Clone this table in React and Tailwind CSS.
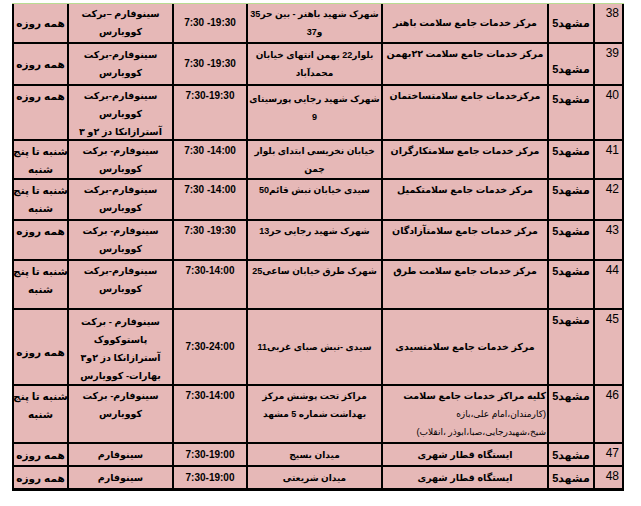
const ROWS = [
  {
    n: "38",
    city: { v: "center" },
    center: { t: ["مرکز خدمات جامع  سلامت  باهنر"], v: "center" },
    addr: { t: ["شهرک شهید باهنر - بین حر35", "و37"], v: "center" },
    time: { t: "7:30 -19:30", v: "center" },
    vac: { t: ["سینوفارم –برکت", "کوویارس"], v: "center" },
    days: { t: ["همه روزه"], v: "center" },
  },
  {
    n: "39",
    city: { v: "top", x: "pt-[16px]" },
    center: { t: ["مرکز خدمات جامع سلامت ۲۲بهمن"], v: "top" },
    addr: { t: ["بلوار22 بهمن انتهای خیابان", "محمدآباد"], v: "center" },
    time: { t: "7:30 -19:30", v: "center" },
    vac: { t: ["سینوفارم-برکت", "کوویارس"], v: "center" },
    days: { t: ["همه روزه"], v: "center" },
  },
  {
    n: "40",
    city: { v: "top", x: "pt-[4px]" },
    center: { t: ["مرکزخدمات جامع  سلامتساختمان"], v: "top" },
    addr: { t: ["شهرک شهید رجایی پورسینای", "9"], v: "top", x: "pt-[4px] leading-[15px]" },
    time: { t: "7:30-19:30", v: "top" },
    vac: { t: ["سینوفارم-برکت", "کوویارس", "آسترازانکا دز ۲و ۳"], v: "top" },
    days: { t: ["همه روزه"], v: "top" },
  },
  {
    n: "41",
    city: { v: "top" },
    center: { t: ["مرکز خدمات جامع  سلامتکارگران"], v: "top" },
    addr: { t: ["خیابان نخریسی ابتدای بلوار", "چمن"], v: "top" },
    time: { t: "7:30 -14:00", v: "top" },
    vac: { t: ["سینوفارم- برکت", "کوویارس"], v: "top" },
    days: { t: ["شنبه تا پنج", "شنبه"], v: "top" },
  },
  {
    n: "42",
    city: { v: "top" },
    center: { t: ["مرکز خدمات جامع  سلامتکمیل"], v: "top" },
    addr: { t: ["سیدی خیابان نبش قائم50"], v: "top" },
    time: { t: "7:30 -14:00", v: "top" },
    vac: { t: ["سینوفارم-برکت", "کوویارس"], v: "top" },
    days: { t: ["شنبه تا پنج", "شنبه"], v: "top" },
  },
  {
    n: "43",
    city: { v: "top" },
    center: { t: ["مرکز خدمات جامع  سلامتآزادگان"], v: "top" },
    addr: { t: ["شهرک شهید رجایی حر13"], v: "top" },
    time: { t: "7:30 -19:30", v: "top" },
    vac: { t: ["سینوفارم- برکت", "کوویارس"], v: "top" },
    days: { t: ["همه روزه"], v: "top" },
  },
  {
    n: "44",
    city: { v: "top" },
    center: { t: ["مرکز خدمات جامع  سلامت طرق"], v: "top" },
    addr: { t: ["شهرک طرق خیابان ساعی25"], v: "top" },
    time: { t: "7:30-14:00", v: "top" },
    vac: { t: ["سینوفارم-برکت", "کوویارس"], v: "top" },
    days: { t: ["شنبه تا پنج", "شنبه"], v: "top" },
  },
  {
    n: "45",
    city: { v: "top", x: "pt-[1px]" },
    center: { t: ["مرکز خدمات  جامع سلامتسیدی"], v: "center" },
    addr: { t: ["سیدی -نبش صبای غربی11"], v: "center" },
    time: { t: "7:30-24:00", v: "center" },
    vac: {
      t: ["سینوفارم - برکت", "پاستوکووک", "آسترازانکا دز ۲و۳", "بهارات- کوویارس"],
      v: "top",
      x: "pt-[3px] leading-[17.5px]",
    },
    days: { t: ["همه روزه"], v: "center", x: "pt-[10px]" },
  },
  {
    n: "46",
    city: { v: "top" },
    center: { t: null, v: "top" },
    addr: { t: ["مراکز تحت پوشش مرکز", "بهداشت شماره 5 مشهد"], v: "top" },
    time: { t: "7:30-14:00", v: "top" },
    vac: { t: ["سینوفارم- برکت", "کوویارس"], v: "top" },
    days: { t: ["شنبه تا پنج", "شنبه"], v: "top" },
  },
  {
    n: "47",
    city: { v: "center" },
    center: { t: ["ایستگاه قطار شهری"], v: "center" },
    addr: { t: ["میدان بسیج"], v: "center" },
    time: { t: "7:30-19:00", v: "center" },
    vac: { t: ["سینوفارم"], v: "center" },
    days: { t: ["همه روزه"], v: "center" },
  },
  {
    n: "48",
    city: { v: "center" },
    center: { t: ["ایستگاه قطار شهری"], v: "center" },
    addr: { t: ["میدان شریعتی"], v: "center" },
    time: { t: "7:30-19:00", v: "center" },
    vac: { t: ["سینوفارم"], v: "center" },
    days: { t: ["همه روزه"], v: "center" },
  },
];

function Cell({ v, x = "", size = "text-[9px]", children }) {
  return (
    <div
      className={
        "flex flex-col items-center overflow-hidden bg-[#e6b8b7] text-center font-bold leading-[18px] text-black " +
        size +
        " " +
        (v === "center" ? "justify-center " : "justify-start pt-[1px] ") +
        x
      }
    >
      {children}
    </div>
  );
}

function Lines({ cell, size }) {
  return (
    <Cell v={cell.v} x={cell.x} size={size}>
      {cell.t.map((l, i) => (
        <span key={i} className="whitespace-nowrap">
          {l}
        </span>
      ))}
    </Cell>
  );
}

function App() {
  return (
    <div className="h-[506px] w-[641px] bg-white pl-[12px] pt-[3px] font-['Liberation_Sans','DejaVu_Sans',sans-serif]">
      <div
        dir="rtl"
        className="grid w-[612px] grid-cols-[27px_44px_164px_133px_72px_103px_53px] grid-rows-[38px_40px_53px_37px_39px_38px_47px_74px_56px_21px_21px] gap-[2px] border-t border-[#b9dc93] bg-black px-[2px] pb-[3px]"
      >
        {ROWS.map((r) => (
          <Row key={r.n} r={r} />
        ))}
      </div>
    </div>
  );
}

function Row({ r }) {
  return (
    <>
      <div className="bg-[#e6b8b7] pr-[3px] pt-[2px] text-right text-[12px] leading-[14px] text-black">
        {r.n}
      </div>
      <Cell v={r.city.v} x={r.city.x} size="text-[11px]">
        <span className="whitespace-nowrap">مشهد5</span>
      </Cell>
      {r.center.t ? (
        <Lines cell={r.center} size="text-[9.5px]" />
      ) : (
        <div className="flex flex-col items-start bg-[#e6b8b7] pr-[1px] pt-[1px] text-right leading-[18px] text-black">
          <span className="whitespace-nowrap text-[9.5px] font-bold">کلیه مراکز خدمات جامع سلامت</span>
          <span className="whitespace-nowrap text-[9px]">(کارمندان،امام علی،بازه</span>
          <span className="whitespace-nowrap text-[9px]">شیخ،شهیدرجایی،صبا،ابوذر ،انقلاب)</span>
        </div>
      )}
      <Lines cell={r.addr} size="text-[9px]" />
      <Cell v={r.time.v} x={r.time.x}>
        <span dir="ltr" className="whitespace-nowrap text-[10px]">
          {r.time.t}
        </span>
      </Cell>
      <Lines cell={r.vac} size="text-[9.5px]" />
      <Lines cell={r.days} size="text-[10.5px]" />
    </>
  );
}

export default App;
